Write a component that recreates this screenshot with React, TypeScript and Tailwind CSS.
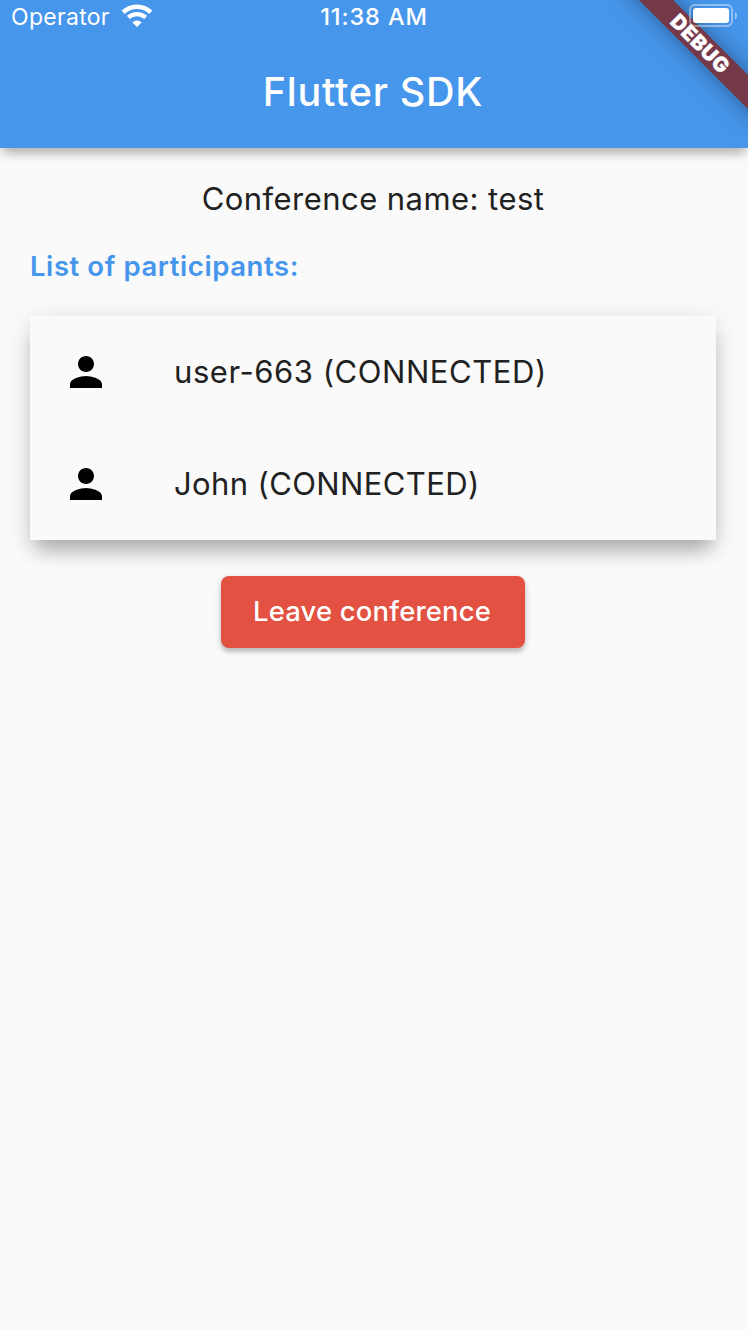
import React from "react";

function WifiIcon() {
  return (
    <svg className="h-[24px] w-[32px]" viewBox="0 0 32 24" fill="none">
      <path d="M2.2 8.2A20.2 20.2 0 0 1 29.8 8.2" stroke="white" strokeWidth="4.6" />
      <path d="M7.3 13.4A13 13 0 0 1 24.7 13.4" stroke="white" strokeWidth="4.2" />
      <path d="M11.4 18.4A6.7 6.7 0 0 1 20.6 18.4L16 23Z" fill="white" />
    </svg>
  );
}

function BatteryIcon() {
  return (
    <svg className="relative z-10 h-[24px] w-[48px]" viewBox="0 0 48 24" fill="none">
      <rect x="1" y="1" width="42" height="21" rx="5" stroke="white" strokeOpacity="0.4" strokeWidth="2" />
      <rect x="4" y="4" width="36" height="15" rx="3" fill="white" />
      <path d="M46 8V15.4C47.6 14.4 48 13 48 11.7S47.6 9 46 8Z" fill="white" fillOpacity="0.45" />
    </svg>
  );
}

function StatusBar() {
  return (
    <div className="grid h-[40px] grid-cols-[1fr_auto_1fr] text-[24px] leading-[34px] text-white">
      <div className="flex pl-[11px]">
        <span className="w-[110px] text-[23px] font-normal tracking-[0.3px]">Operator</span>
        <div className="pt-[4px]">
          <WifiIcon />
        </div>
      </div>
      <span className="text-[23.5px] font-medium tracking-[0.9px]">11:38 AM</span>
      <div className="flex justify-end pt-[4px] pr-[11px]">
        <BatteryIcon />
      </div>
    </div>
  );
}

function DebugBanner() {
  return (
    <div className="pointer-events-none absolute top-0 right-0 h-[148px] w-[150px] overflow-hidden">
      <div className="absolute top-[32px] left-[2px] flex h-[24px] w-[200px] rotate-45 items-center justify-center bg-[#743849] shadow-[0_0_24px_rgba(0,0,0,0.4)]">
        <span className="text-[20.4px] leading-none font-black tracking-[0.6px] text-white [-webkit-text-stroke:0.3px_white]">DEBUG</span>
      </div>
    </div>
  );
}

function Participant({ name, spacing }: { name: string; spacing: string }) {
  return (
    <li className="flex h-[112px] items-center pl-[32px]">
      <svg className="h-12 w-12" viewBox="0 0 24 24" fill="black">
        <path d="M12 12c2.21 0 4-1.79 4-4s-1.79-4-4-4-4 1.79-4 4 1.79 4 4 4zm0 2c-2.67 0-8 1.34-8 4v2h16v-2c0-2.66-5.33-4-8-4z" />
      </svg>
      <span className={`ml-[64px] text-[31px] leading-[40px] ${spacing}`}>{name}</span>
    </li>
  );
}

export default function App() {
  return (
    <div className="flex h-[1330px] w-[748px] flex-col overflow-hidden bg-[#fafafa] font-['Inter',sans-serif] text-[#212121]">
      <header className="relative h-[148px] shrink-0 bg-[#4696ec] shadow-[0_8px_10px_-3px_rgba(0,0,0,0.24),0_3px_14px_rgba(0,0,0,0.1)]">
        <StatusBar />
        <h1 className="pt-[28px] pr-[2px] text-center text-[39.5px] leading-[48px] font-medium tracking-[0.7px] text-white">Flutter SDK</h1>
        <DebugBanner />
      </header>
      <main className="flex flex-col pr-[32px] pl-[30px]">
        <p className="mt-[31px] text-center text-[31px] leading-[40px] tracking-[0.45px]">Conference name: test</p>
        <h2 className="mt-[30px] text-[27.5px] leading-[34px] font-semibold tracking-[0.57px] text-[#4696ec]">List of participants:</h2>
        <ul className="mt-[33px] bg-[#fafafa] shadow-[0_16px_18px_-6px_rgba(0,0,0,0.24),0_6px_24px_rgba(0,0,0,0.14)]">
          <Participant name="user-663 (CONNECTED)" spacing="tracking-[0.55px]" />
          <Participant name="John (CONNECTED)" spacing="tracking-[0.38px]" />
        </ul>
        <button className="mt-[36px] h-[72px] w-[304px] self-center rounded-[8px] bg-[#e25142] pr-[2px] text-[27.5px] font-medium tracking-[0.15px] text-white shadow-[0_4px_4px_rgba(0,0,0,0.18),0_2px_8px_rgba(0,0,0,0.12)]">
          Leave conference
        </button>
      </main>
    </div>
  );
}
